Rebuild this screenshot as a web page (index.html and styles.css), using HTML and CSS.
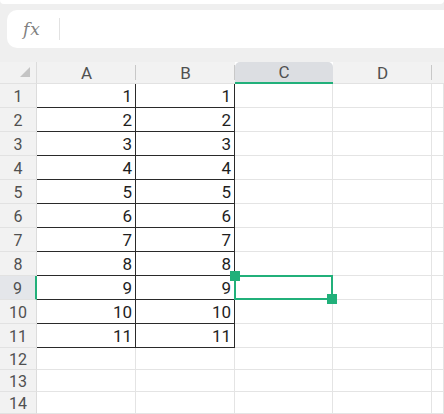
FILE: index.html
```html
<!DOCTYPE html>
<html>
<head>
<meta charset="utf-8">
<link rel="stylesheet" href="styles.css">
</head>
<body>
<div class="top-strip"></div>
<div class="fbar"><span class="fx">fx</span><span class="fsep"></span></div>
<div class="sheet">
  <div class="corner"><span class="tri"></span></div>
  <div class="ch">A</div>
  <div class="ch">B</div>
  <div class="ch sel">C</div>
  <div class="ch">D</div>
  <div class="ch last"></div>

  <div class="rh">1</div><div class="c blk">1</div><div class="c blk">1</div><div class="c"></div><div class="c"></div><div class="c"></div>
  <div class="rh">2</div><div class="c blk">2</div><div class="c blk">2</div><div class="c"></div><div class="c"></div><div class="c"></div>
  <div class="rh">3</div><div class="c blk">3</div><div class="c blk">3</div><div class="c"></div><div class="c"></div><div class="c"></div>
  <div class="rh">4</div><div class="c blk">4</div><div class="c blk">4</div><div class="c"></div><div class="c"></div><div class="c"></div>
  <div class="rh">5</div><div class="c blk">5</div><div class="c blk">5</div><div class="c"></div><div class="c"></div><div class="c"></div>
  <div class="rh">6</div><div class="c blk">6</div><div class="c blk">6</div><div class="c"></div><div class="c"></div><div class="c"></div>
  <div class="rh">7</div><div class="c blk">7</div><div class="c blk">7</div><div class="c"></div><div class="c"></div><div class="c"></div>
  <div class="rh">8</div><div class="c blk">8</div><div class="c blk">8</div><div class="c"></div><div class="c"></div><div class="c"></div>
  <div class="rh rsel">9</div><div class="c blk">9</div><div class="c blk">9</div><div class="c active"><span class="selbox"><span class="h h-tl"></span><span class="h h-br"></span></span></div><div class="c"></div><div class="c"></div>
  <div class="rh">10</div><div class="c blk">10</div><div class="c blk">10</div><div class="c"></div><div class="c"></div><div class="c"></div>
  <div class="rh">11</div><div class="c blk">11</div><div class="c blk">11</div><div class="c"></div><div class="c"></div><div class="c"></div>
  <div class="rh">12</div><div class="c"></div><div class="c"></div><div class="c"></div><div class="c"></div><div class="c"></div>
  <div class="rh">13</div><div class="c"></div><div class="c"></div><div class="c"></div><div class="c"></div><div class="c"></div>
  <div class="rh">14</div><div class="c"></div><div class="c"></div><div class="c"></div><div class="c"></div><div class="c"></div>
</div>
</body>
</html>
```
FILE: styles.css
```css
* { box-sizing: border-box; }
html, body { margin: 0; padding: 0; }
body {
  width: 444px;
  height: 414px;
  overflow: hidden;
  background: #efefef;
  font-family: Roboto, "Liberation Sans", sans-serif;
}
.top-strip {
  height: 4px;
  background: #fff;
  border-radius: 0 0 8px 8px;
}
.fbar {
  margin: 6px 0 0 7px;
  height: 38px;
  background: #fff;
  border-radius: 10px 0 0 10px;
  display: flex;
  align-items: center;
}
.fx {
  font-family: "DejaVu Serif", "Liberation Serif", serif;
  font-style: italic;
  font-size: 17px;
  color: #808080;
  margin-left: 16px;
  width: 36px;
  letter-spacing: 1px;
}
.fsep {
  width: 1px;
  height: 22px;
  background: #e2e2e2;
}
.sheet {
  margin-top: 14px;
  display: grid;
  grid-template-columns: 37px 99px 99px 98px 99px 1fr;
  grid-template-rows: 22px repeat(11, 24px) repeat(3, 22px);
  background: #fff;
}
.corner {
  background: #f2f2f2;
  border-bottom: 1px solid #e2e2e2;
  border-right: 1px solid #dcdcdc;
  position: relative;
}
.tri {
  position: absolute;
  right: 6px;
  bottom: 6px;
  width: 0;
  height: 0;
  border-left: 10px solid transparent;
  border-bottom: 10px solid #c4c4c4;
}
.ch {
  background: #f2f2f2;
  border-bottom: 1px solid #e2e2e2;
  position: relative;
  display: flex;
  align-items: center;
  justify-content: center;
  font-size: 17px;
  color: #505050;
}
.ch::after {
  content: "";
  position: absolute;
  right: 0;
  top: 3px;
  width: 1px;
  height: 15px;
  background: #c8c8c8;
}
.ch.last::after { display: none; }
.ch.sel {
  background: #dcdee2;
  border-radius: 5px 5px 0 0;
  border-bottom: 2px solid #21b07a;
}
.ch.sel::after { display: none; }
.rh {
  background: #f2f2f2;
  border-bottom: 1px solid #e2e2e2;
  border-right: 1px solid #dcdcdc;
  display: flex;
  align-items: center;
  justify-content: center;
  font-size: 16px;
  color: #505050;
  padding-top: 1px;
}
.rh.rsel {
  background: #e4e6ea;
  border-right: 2px solid #21b07a;
}
.c {
  border-right: 1px solid #e4e4e4;
  border-bottom: 1px solid #e4e4e4;
  display: flex;
  align-items: center;
  justify-content: flex-end;
  padding: 1px 3px 0 0;
  font-size: 17px;
  color: #1e1e1e;
}
.c.blk {
  border-right-color: #2a2a2a;
  border-bottom-color: #2a2a2a;
}
.c.active { position: relative; }
.selbox {
  position: absolute;
  left: -1px;
  top: -1px;
  right: -1px;
  bottom: -1px;
  border: 2px solid #21b07a;
}
.h {
  position: absolute;
  width: 10px;
  height: 10px;
  background: #21b07a;
}
.h-tl { left: -6px; top: -6px; }
.h-br { right: -6px; bottom: -6px; }
```
